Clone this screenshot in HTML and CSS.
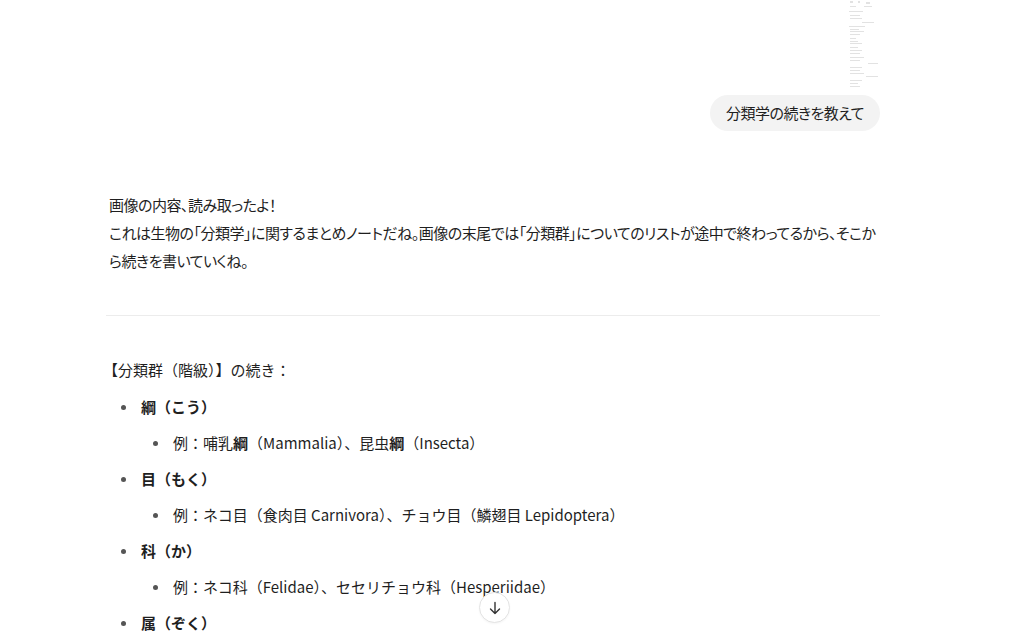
FILE: index.html
```html
<!DOCTYPE html>
<html lang="ja">
<head>
<meta charset="utf-8">
<link rel="stylesheet" href="styles.css">
</head>
<body>
<main class="thread">
  <section class="user-msg">
    <div class="attachment">
      <svg width="32" height="90" viewBox="0 0 32 90">
        <g fill="#e2e2e2">
          <rect x="2" y="1" width="3" height="2"/><rect x="10" y="1" width="2" height="2"/><rect x="18" y="2" width="4" height="2"/>
          <rect x="2" y="6" width="6" height="1"/><rect x="16" y="6" width="8" height="1"/>
          <rect x="1" y="11" width="14" height="1"/>
          <rect x="2" y="15" width="10" height="1"/><rect x="2" y="18" width="12" height="1"/>
          <rect x="14" y="22" width="12" height="1"/>
          <rect x="1" y="26" width="16" height="1"/>
          <rect x="2" y="29" width="9" height="1"/><rect x="2" y="31" width="14" height="1"/><rect x="2" y="34" width="10" height="1"/>
          <rect x="2" y="38" width="6" height="1"/><rect x="2" y="41" width="8" height="1"/><rect x="2" y="43" width="12" height="1"/>
          <rect x="2" y="47" width="8" height="1"/><rect x="2" y="50" width="12" height="1"/><rect x="2" y="53" width="10" height="1"/>
          <rect x="2" y="57" width="14" height="1"/><rect x="2" y="60" width="10" height="1"/>
          <rect x="20" y="63" width="10" height="1"/>
          <rect x="2" y="67" width="12" height="1"/><rect x="2" y="70" width="10" height="1"/><rect x="2" y="73" width="14" height="1"/>
          <rect x="18" y="76" width="12" height="1"/>
          <rect x="2" y="80" width="12" height="1"/><rect x="2" y="83" width="8" height="1"/><rect x="2" y="86" width="10" height="1"/>
        </g>
      </svg>
    </div>
    <div class="bubble">分類学の続きを教えて</div>
  </section>

  <section class="assistant">
    <p class="intro">画像の内容、読み取ったよ！<br>これは生物の「分類学」に関するまとめノートだね。画像の末尾では「分類群」についてのリストが途中で終わってるから、そこから続きを書いていくね。</p>
    <hr class="divider">
    <p class="heading">【分類群（階級）】の続き：</p>
    <ul class="ranks">
      <li><strong>綱（こう）</strong>
        <ul class="examples">
          <li>例：哺乳<strong>綱</strong>（Mammalia）、昆虫<strong>綱</strong>（Insecta）</li>
        </ul>
      </li>
      <li><strong>目（もく）</strong>
        <ul class="examples">
          <li>例：ネコ目（食肉目 Carnivora）、チョウ目（鱗翅目 Lepidoptera）</li>
        </ul>
      </li>
      <li><strong>科（か）</strong>
        <ul class="examples">
          <li>例：ネコ科（Felidae）、セセリチョウ科（Hesperiidae）</li>
        </ul>
      </li>
      <li><strong>属（ぞく）</strong></li>
    </ul>
  </section>
</main>
<button class="scroll-down" aria-label="下へスクロール">
  <svg width="16" height="16" viewBox="0 0 16 16" fill="none" stroke="#333" stroke-width="1.4" stroke-linecap="round" stroke-linejoin="round"><path d="M8 2.5v11M3.5 9l4.5 4.5L12.5 9"/></svg>
</button>
</body>
</html>
```

FILE: styles.css
```css
html, body {
  margin: 0;
  padding: 0;
  background: #fff;
  height: 639px;
  overflow: hidden;
}
body {
  font-family: "Noto Sans CJK JP", sans-serif;
  font-size: 15px;
  color: #1f1f1f;
}
.thread {
  width: 771px;
  margin-left: 109px;
}
.user-msg {
  display: flex;
  flex-direction: column;
  align-items: flex-end;
}
.attachment {
  width: 32px;
  height: 90px;
}
.attachment svg { display: block; }
.bubble {
  margin-top: 5px;
  background: #f3f3f3;
  border-radius: 18px;
  padding: 0 16px;
  height: 36px;
  line-height: 36px;
  color: #1f1f1f;
  font-feature-settings: "palt";
  letter-spacing: -0.5px;
}
.assistant {
  margin-top: 60px;
}
.intro {
  margin: 0;
  line-height: 28px;
  font-feature-settings: "palt";
  letter-spacing: -0.5px;
}
.divider {
  border: 0;
  border-top: 1px solid #ececec;
  margin: 40px 0 40px -3px;
}
.heading {
  margin: 0 0 9px -6px;
  line-height: 28px;
}
.ranks {
  list-style: none;
  margin: 0;
  padding: 0;
}
.ranks li {
  position: relative;
  line-height: 28px;
  margin-bottom: 8px;
}
.ranks > li {
  padding-left: 32px;
}
.ranks li::before {
  content: "";
  position: absolute;
  width: 5px;
  height: 5px;
  border-radius: 50%;
  background: #555;
  top: 12px;
}
.ranks > li::before {
  left: 12px;
}
.examples {
  list-style: none;
  margin: 8px 0 0 0;
  padding: 0 0 0 32px;
}
.examples li::before {
  left: -20px;
}
.examples li { margin-bottom: 0; }
strong { font-weight: 700; }
.scroll-down {
  position: absolute;
  left: 479px;
  top: 592px;
  width: 31px;
  height: 31px;
  border-radius: 50%;
  border: 1px solid #e3e3e3;
  background: #fff;
  display: flex;
  align-items: center;
  justify-content: center;
  padding: 0;
  box-shadow: 0 1px 2px rgba(0,0,0,0.04);
}
```
